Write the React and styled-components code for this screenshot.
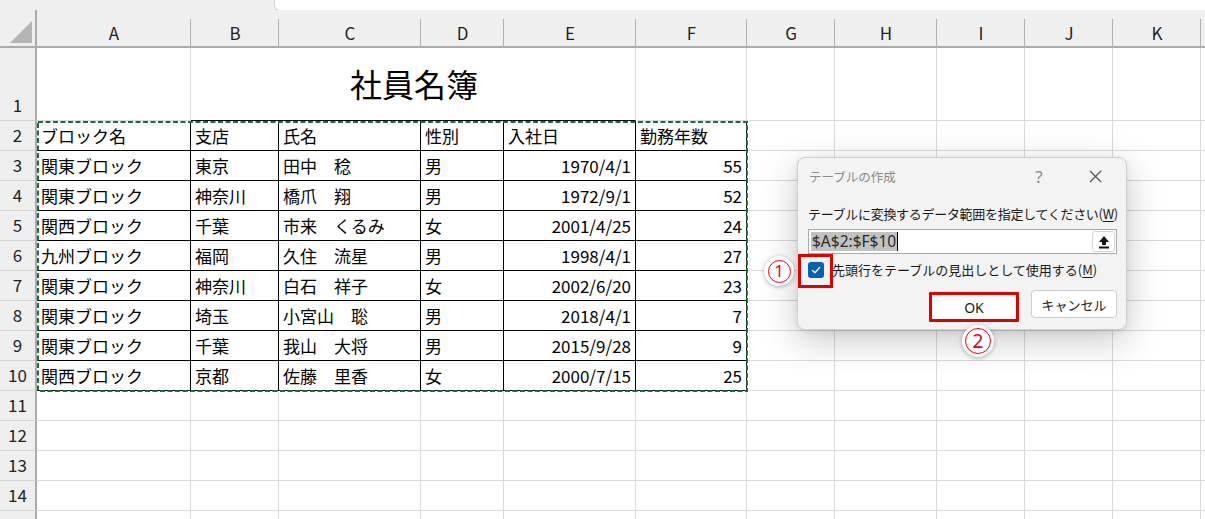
import React from "react";
import styled, { createGlobalStyle } from "styled-components";

const GlobalStyle = createGlobalStyle`
  html, body {
    margin: 0;
    padding: 0;
    background: #ffffff;
    overflow: hidden;
  }
  body {
    font-family: "Noto Sans CJK JP", "Noto Sans", sans-serif;
  }
`;

const colWidths = [154, 88, 142, 83, 132, 111, 88, 102, 88, 88, 88];
const letters = ["A", "B", "C", "D", "E", "F", "G", "H", "I", "J", "K", ""];

const tableRows = [
  ["ブロック名", "支店", "氏名", "性別", "入社日", "勤務年数"],
  ["関東ブロック", "東京", "田中　稔", "男", "1970/4/1", "55"],
  ["関東ブロック", "神奈川", "橋爪　翔", "男", "1972/9/1", "52"],
  ["関西ブロック", "千葉", "市来　くるみ", "女", "2001/4/25", "24"],
  ["九州ブロック", "福岡", "久住　流星", "男", "1998/4/1", "27"],
  ["関東ブロック", "神奈川", "白石　祥子", "女", "2002/6/20", "23"],
  ["関東ブロック", "埼玉", "小宮山　聡", "男", "2018/4/1", "7"],
  ["関東ブロック", "千葉", "我山　大将", "男", "2015/9/28", "9"],
  ["関西ブロック", "京都", "佐藤　里香", "女", "2000/7/15", "25"],
];

// row 15 is only a sliver at the bottom edge, its number is not visible
const VISIBLE_ROWS = 15;

function App() {
  const renderRow = (r) => {
    const cells = [];
    cells.push(<RowHead key={`h${r}`}>{r < VISIBLE_ROWS ? r : ""}</RowHead>);
    if (r === 1) {
      cells.push(<Cell key="a1" />);
      cells.push(<TitleCell key="title">社員名簿</TitleCell>);
      for (let c = 5; c < 12; c++) cells.push(<Cell key={`c${c}`} />);
      return cells;
    }
    const data = tableRows[r - 2];
    for (let c = 0; c < 12; c++) {
      if (data && c < 6) {
        const isNum = r > 2 && c >= 4;
        cells.push(
          <Cell key={`c${c}`} $ruled $num={isNum}>
            {data[c]}
          </Cell>
        );
      } else {
        cells.push(<Cell key={`c${c}`} />);
      }
    }
    return cells;
  };

  const rowNums = Array.from({ length: VISIBLE_ROWS }, (_, i) => i + 1);

  return (
    <Page>
      <GlobalStyle />
      <TopStrip>
        <FormulaBox />
      </TopStrip>
      <Sheet>
        <Corner>
          <svg width="24" height="24" viewBox="0 0 24 24">
            <polygon points="23,1 23,23 1,23" fill="#b5b5b5" />
          </svg>
        </Corner>
        {letters.map((l, i) => (
          <ColHead key={`col${i}`}>{l}</ColHead>
        ))}
        {rowNums.map((r) => renderRow(r))}
        <Ants width="711" height="271" viewBox="0 0 711 271">
          <rect
            x="1"
            y="1"
            width="709"
            height="269"
            fill="none"
            stroke="#1d6b40"
            strokeWidth="2"
            strokeDasharray="5 2.5"
          />
        </Ants>
      </Sheet>

      <Dialog>
        <TitleBar>
          <DialogTitle>テーブルの作成</DialogTitle>
          <TitleButton>?</TitleButton>
          <TitleButton>
            <svg width="13" height="13" viewBox="0 0 13 13">
              <line x1="1" y1="1" x2="12" y2="12" stroke="#555" strokeWidth="1.2" />
              <line x1="12" y1="1" x2="1" y2="12" stroke="#555" strokeWidth="1.2" />
            </svg>
          </TitleButton>
        </TitleBar>
        <FieldLabel>
          テーブルに変換するデータ範囲を指定してください(<u>W</u>)
        </FieldLabel>
        <RangeInput>
          <Selected>$A$2:$F$10</Selected>
          <Caret />
          <Spacer />
          <CollapseButton>
            <svg width="12" height="14" viewBox="0 0 12 14">
              <polygon points="6,1 11,7 8,7 8,10 4,10 4,7 1,7" fill="#111" />
              <rect x="1" y="11.5" width="10" height="2" fill="#111" />
            </svg>
          </CollapseButton>
        </RangeInput>
        <CheckRow>
          <CheckBox>
            <svg width="16" height="16" viewBox="0 0 16 16">
              <polyline
                points="4.5,8.5 7,10.8 11.5,5.5"
                fill="none"
                stroke="#fff"
                strokeWidth="1.4"
                strokeLinecap="round"
                strokeLinejoin="round"
              />
            </svg>
            <CheckMark />
          </CheckBox>
          <CheckLabel>
            先頭行をテーブルの見出しとして使用する(<u>M</u>)
          </CheckLabel>
        </CheckRow>
        <ButtonRow>
          <DialogButton $marked>OK</DialogButton>
          <DialogButton>キャンセル</DialogButton>
        </ButtonRow>
      </Dialog>

      <Badge $x={779} $y={271} $size={30} $ring={23}>1</Badge>
      <Badge $x={978} $y={341} $size={32} $ring={26}>2</Badge>
    </Page>
  );
}

const Page = styled.div`
  position: relative;
  width: 1205px;
  height: 519px;
  overflow: hidden;
  background: #ffffff;
`;

const TopStrip = styled.div`
  display: flex;
  height: 11px;
  background: #efefef;
`;

const FormulaBox = styled.div`
  margin-left: 274px;
  flex: 1;
  height: 10px;
  background: #ffffff;
  border-left: 1px solid #d2d2d2;
  border-bottom: 1px solid #d2d2d2;
  border-bottom-left-radius: 6px;
`;

const Sheet = styled.div`
  position: relative;
  display: grid;
  grid-template-columns: 37px ${colWidths.map((w) => `${w}px`).join(" ")} 1fr;
  grid-template-rows: 38px 73px repeat(14, 30px);
  margin-top: -1px;
`;

const Corner = styled.div`
  background: #efefef;
  border-right: 2px solid #ababab;
  border-bottom: 2px solid #ababab;
  display: flex;
  align-items: flex-end;
  justify-content: flex-end;
  padding: 0 2px 2px 0;
  box-sizing: border-box;
`;

const ColHead = styled.div`
  position: relative;
  background: #efefef;
  border-bottom: 2px solid #ababab;
  display: flex;
  align-items: center;
  justify-content: center;
  padding-top: 8px;
  box-sizing: border-box;
  font-family: "Noto Sans CJK JP", "Noto Sans", sans-serif;
  font-size: 17px;
  color: #1f1f1f;

  &::after {
    content: "";
    position: absolute;
    right: 0;
    top: 9px;
    bottom: 0;
    width: 1px;
    background: #b2b2b2;
  }
`;

const RowHead = styled.div`
  background: #efefef;
  border-right: 2px solid #ababab;
  border-bottom: 1px solid #d4d4d4;
  display: flex;
  align-items: flex-end;
  justify-content: center;
  padding-bottom: 4px;
  box-sizing: border-box;
  font-size: 17px;
  line-height: 22px;
  color: #1f1f1f;
`;

const Cell = styled.div`
  border-right: 1px solid ${(p) => (p.$ruled ? "#000000" : "#dadada")};
  border-bottom: 1px solid ${(p) => (p.$ruled ? "#000000" : "#dadada")};
  display: flex;
  align-items: flex-end;
  justify-content: ${(p) => (p.$num ? "flex-end" : "flex-start")};
  padding: 0 4px 3px;
  box-sizing: border-box;
  font-size: 17px;
  line-height: 22px;
  color: #000000;
  white-space: nowrap;
  overflow: hidden;
`;

const TitleCell = styled.div`
  grid-column: span 4;
  border-right: 1px solid #dadada;
  border-bottom: 1px solid #000000;
  display: flex;
  align-items: center;
  justify-content: center;
  font-size: 32px;
  line-height: 40px;
  color: #000000;
  padding-left: 2px;
  padding-bottom: 2px;
`;

const Ants = styled.svg`
  position: absolute;
  left: 37px;
  top: 111px;
  pointer-events: none;
`;

const Dialog = styled.div`
  position: absolute;
  left: 797px;
  top: 157px;
  width: 330px;
  height: 173px;
  box-sizing: border-box;
  padding: 0 9px 0 10px;
  display: flex;
  flex-direction: column;
  background: #f3f3f3;
  border: 1px solid #cfcfcf;
  border-radius: 8px;
  box-shadow: 0 10px 36px rgba(0, 0, 0, 0.22), 0 2px 6px rgba(0, 0, 0, 0.08);
  font-family: "Noto Sans CJK JP", "Noto Sans", sans-serif;
  color: #1a1a1a;
`;

const TitleBar = styled.div`
  display: flex;
  align-items: center;
  height: 37px;
  gap: 12px;
`;

const DialogTitle = styled.div`
  flex: 1;
  font-size: 12.5px;
  color: #8a8a8a;
  padding-left: 1px;
`;

const TitleButton = styled.div`
  width: 44px;
  display: flex;
  align-items: center;
  justify-content: center;
  font-family: "Noto Sans", sans-serif;
  font-size: 17px;
  color: #8a8a8a;
`;

const FieldLabel = styled.div`
  margin-top: 10px;
  font-size: 13px;
  line-height: 18px;
  letter-spacing: -0.3px;
  white-space: nowrap;

  u {
    text-underline-offset: 2px;
  }
`;

const RangeInput = styled.div`
  margin-top: 6px;
  height: 25px;
  box-sizing: border-box;
  display: flex;
  align-items: center;
  padding: 0 1px 0 2px;
  background: #ffffff;
  border: 1px solid #a9a9a9;
`;

const Selected = styled.span`
  background: #c2c2c2;
  color: #2a2a2a;
  font-family: "Noto Sans", sans-serif;
  font-size: 15.5px;
  line-height: 19px;
  padding: 0 1px;
`;

const Caret = styled.span`
  width: 1px;
  height: 19px;
  background: #000000;
`;

const Spacer = styled.span`
  flex: 1;
`;

const CollapseButton = styled.div`
  width: 23px;
  height: 21px;
  box-sizing: border-box;
  display: flex;
  align-items: center;
  justify-content: center;
  background: #ffffff;
  border: 1px solid #d4d4d4;
  border-radius: 3px;
`;

const CheckRow = styled.div`
  margin-top: 7px;
  height: 18px;
  display: flex;
  align-items: center;
  gap: 8px;
`;

const CheckBox = styled.div`
  position: relative;
  width: 16px;
  height: 16px;
  border-radius: 3px;
  background: #005fb8;
  display: flex;
`;

const CheckMark = styled.div`
  position: absolute;
  left: -10px;
  top: -8px;
  width: 35px;
  height: 34px;
  box-sizing: border-box;
  border: 3px solid #e00000;
`;

const CheckLabel = styled.div`
  font-size: 13px;
  line-height: 18px;
  white-space: nowrap;

  u {
    text-underline-offset: 2px;
  }
`;

const ButtonRow = styled.div`
  margin-top: 11px;
  display: flex;
  justify-content: flex-end;
  align-items: flex-start;
  gap: 12px;
`;

const DialogButton = styled.div`
  width: ${(p) => (p.$marked ? "90px" : "86px")};
  height: ${(p) => (p.$marked ? "30px" : "28px")};
  margin-top: ${(p) => (p.$marked ? "2px" : "0")};
  box-sizing: border-box;
  display: flex;
  align-items: center;
  justify-content: center;
  background: #ffffff;
  border: ${(p) => (p.$marked ? "3px solid #e00000" : "1px solid #cfcfcf")};
  border-radius: ${(p) => (p.$marked ? "1px" : "4px")};
  font-size: ${(p) => (p.$marked ? "14px" : "13px")};
  font-family: ${(p) => (p.$marked ? '"Noto Sans", sans-serif' : '"Noto Sans CJK JP", sans-serif')};
  color: #1a1a1a;
`;

const Badge = styled.div`
  position: absolute;
  left: ${(p) => p.$x - p.$size / 2}px;
  top: ${(p) => p.$y - p.$size / 2}px;
  width: ${(p) => p.$size}px;
  height: ${(p) => p.$size}px;
  border-radius: 50%;
  background: #ffffff;
  box-shadow: 0 1px 4px rgba(0, 0, 0, 0.3);
  display: flex;
  align-items: center;
  justify-content: center;

  &::before {
    content: "";
    position: absolute;
    width: ${(p) => p.$ring}px;
    height: ${(p) => p.$ring}px;
    border-radius: 50%;
    border: 1.5px solid #e60012;
    box-sizing: border-box;
  }

  font-family: "Noto Sans", sans-serif;
  font-size: ${(p) => (p.$ring > 24 ? "19px" : "16px")};
  line-height: 1;
  color: #e60012;
`;

export default App;
